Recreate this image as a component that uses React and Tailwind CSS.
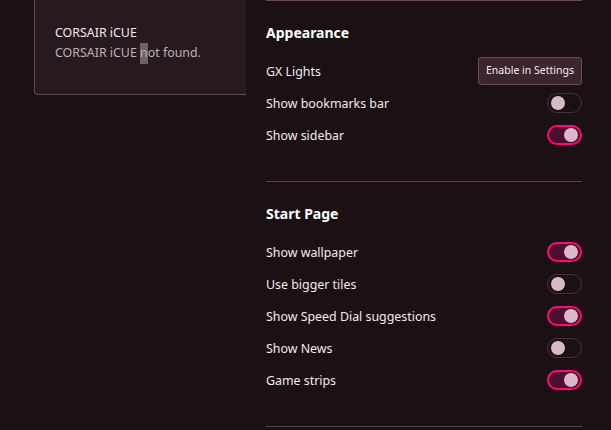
import { useState } from "react"

const font = { fontFamily: '"Noto Sans", "Open Sans", sans-serif' }

function Toggle({ on }) {
  return on ? (
    <div className="w-[35px] h-[20px] rounded-full border-2 border-[#ff0a78] bg-[#4d0d2e] flex items-center justify-end pr-[2px]">
      <div className="w-[14px] h-[14px] rounded-full bg-[#d9b8c9]" />
    </div>
  ) : (
    <div className="w-[35px] h-[20px] rounded-full border border-[#45313b] flex items-center pl-[3px]">
      <div className="w-[14px] h-[14px] rounded-full bg-[#d9b8c9]" />
    </div>
  )
}

function Row({ label, children }) {
  return (
    <div className="h-8 flex items-center justify-between">
      <span className="pt-[2px] text-[12.4px] text-[#f2eaee]">{label}</span>
      {children}
    </div>
  )
}

function Section({ title, rows }) {
  return (
    <div className="pt-[21px] pb-[30px] border-b border-[#5e3d4d]">
      <h2 className="h-[20px] mb-[13px] pt-px flex items-center text-[14px] font-bold text-white">{title}</h2>
      {rows}
    </div>
  )
}

export default function App() {
  const [appearance] = useState([
    { label: "Show bookmarks bar", on: false },
    { label: "Show sidebar", on: true },
  ])
  const startPage = [
    { label: "Show wallpaper", on: true },
    { label: "Use bigger tiles", on: false },
    { label: "Show Speed Dial suggestions", on: true },
    { label: "Show News", on: false },
    { label: "Game strips", on: true },
  ]

  return (
    <div className="w-[611px] h-[430px] overflow-hidden bg-[#1b1114] flex" style={font}>
      <div className="w-[246px] pl-[34px] shrink-0">
        <div className="h-[95px] bg-[#261a20] border-l border-b border-[#6a4457] rounded-bl-[4px] pl-5 pt-[23px]">
          <div className="h-5 flex items-center text-[12.4px] text-[#f2eaee]">CORSAIR iCUE</div>
          <div className="h-5 flex items-center text-[12.4px] text-[#bdb0b7]">
            CORSAIR iCUE&nbsp;<span className="bg-[#6b6366] h-[21px] flex items-center">n</span>ot found.
          </div>
        </div>
      </div>
      <div className="flex-1 pl-5 pr-[29px]">
        <div className="border-t border-[#6a4457]" />
        <Section
          title="Appearance"
          rows={
            <>
              <Row label="GX Lights">
                <button className="h-[28px] w-[104px] rounded-[3px] bg-[#3b2530] border border-[#6e4a5c] text-[10.5px] text-[#f2eaee]">
                  Enable in Settings
                </button>
              </Row>
              {appearance.map((r) => (
                <Row key={r.label} label={r.label}>
                  <Toggle on={r.on} />
                </Row>
              ))}
            </>
          }
        />
        <Section
          title="Start Page"
          rows={startPage.map((r) => (
            <Row key={r.label} label={r.label}>
              <Toggle on={r.on} />
            </Row>
          ))}
        />
      </div>
    </div>
  )
}
